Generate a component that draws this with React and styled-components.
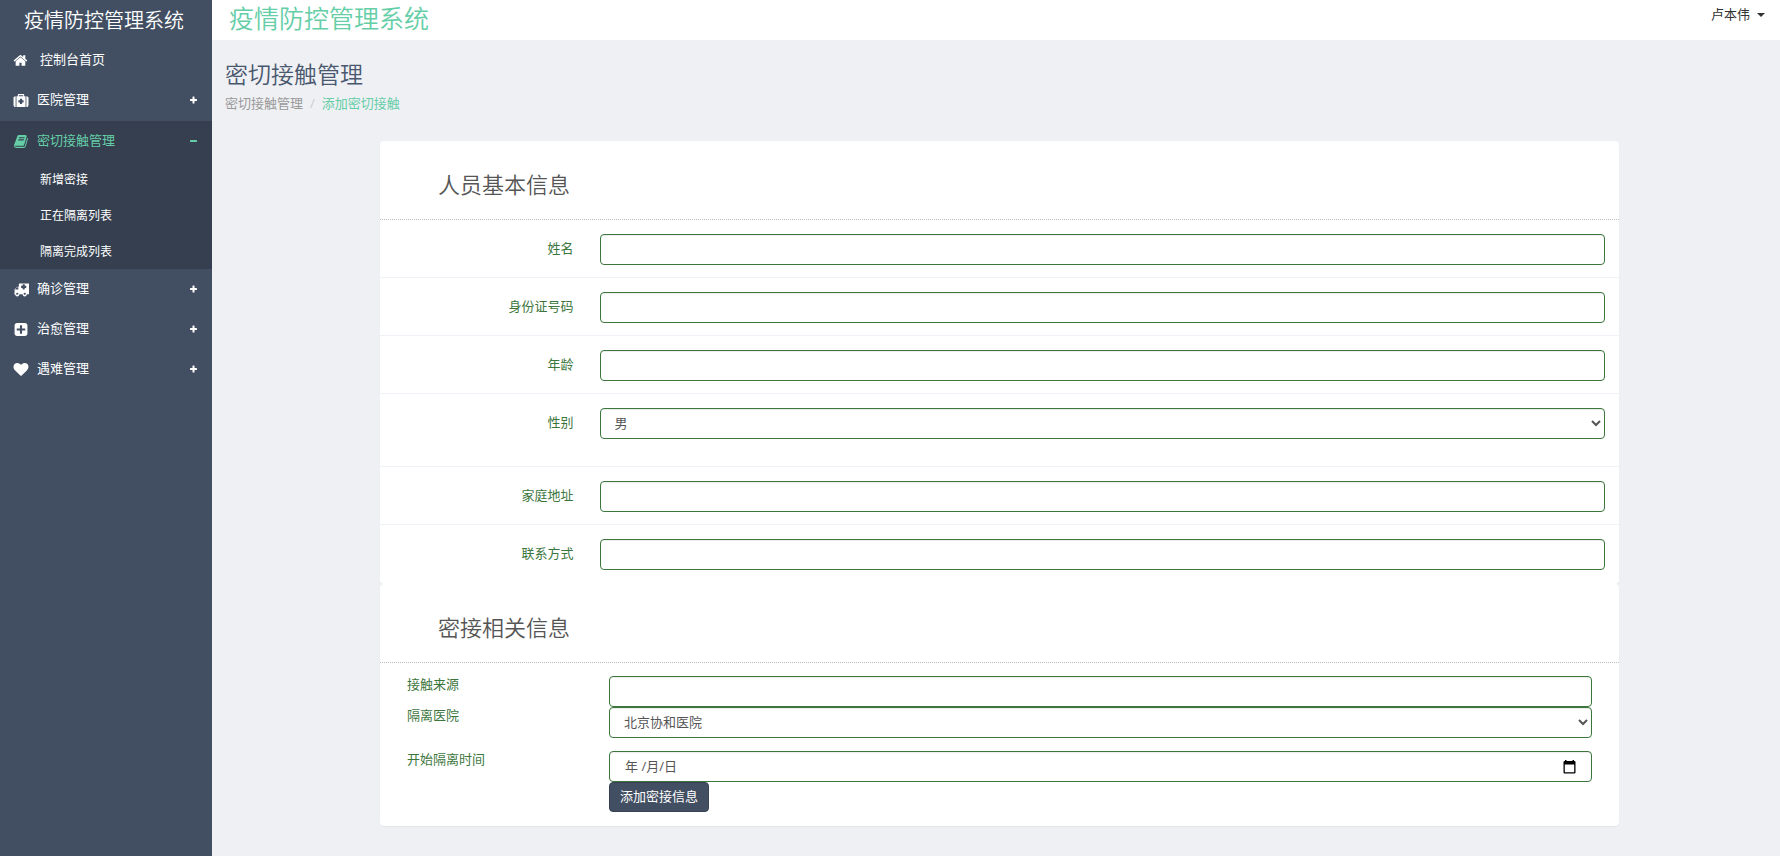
import React from "react";
import styled, { createGlobalStyle, css } from "styled-components";

const theme = {
  dark: "#424f63",
  darker: "#353f4f",
  green: "#65cea7",
  success: "#3c763d",
  page: "#eff0f4",
  text: "#555"
};

const GlobalStyle = createGlobalStyle`
  *, *::before, *::after {
    box-sizing: border-box;
  }

  body {
    margin: 0;
    background: ${theme.page};
    color: ${theme.text};
    font-family: "Open Sans", "Noto Sans CJK SC", sans-serif;
    font-size: 13px;
    line-height: 20px;
  }

  input, select, button {
    font: inherit;
  }

  a {
    text-decoration: none;
  }

  h1, h2, ul, ol {
    margin: 0;
    padding: 0;
    list-style: none;
  }
`;

const Layout = styled.div`
  display: flex;
  min-height: 100vh;
`;

const Sidebar = styled.nav`
  flex: 0 0 212px;
  background: ${theme.dark};
  color: #fff;
`;

const Logo = styled.a`
  display: block;
  height: 40px;
  padding: 1px 4px 0 0;
  color: #fff;
  font-size: 20px;
  font-weight: 350;
  line-height: 39px;
  text-align: center;
`;

const MenuGroup = styled.li`
  ${({ $active }) =>
    $active &&
    css`
      margin-top: 1px;
      background: ${theme.darker};
      color: ${theme.green};
    `}
`;

const MenuLink = styled.a`
  display: flex;
  align-items: center;
  height: 40px;
  padding: 0 14px 0 13px;
  color: inherit;
`;

const MenuText = styled.span`
  flex: 1;
  padding: 0 0 2px ${({ $wide }) => ($wide ? "11px" : "8px")};
`;

const SubLink = styled.a`
  display: block;
  padding: 2px 0 0 40px;
  color: #fff;
  font-size: 12px;
  line-height: 34px;
`;

const Main = styled.div`
  flex: 1;
  min-width: 0;
`;

const Header = styled.header`
  display: flex;
  justify-content: space-between;
  align-items: flex-start;
  height: 41px;
  padding: 0 15px 0 17px;
  background: #fff;
  border-bottom: 1px solid ${theme.page};
`;

const Brand = styled.span`
  color: ${theme.green};
  font-size: 25px;
  font-weight: 350;
  line-height: 36px;
`;

const UserButton = styled.button`
  display: flex;
  align-items: center;
  gap: 7px;
  padding: 4px 0;
  border: 0;
  background: none;
  color: #333;
`;

const Caret = styled.span`
  margin-top: 2px;
  border: 4px solid transparent;
  border-top-color: #333;
  border-bottom: 0;
`;

const PageHeading = styled.section`
  padding: 18px 13px 28px;
`;

const PageTitle = styled.h1`
  color: #49586e;
  font-size: 23px;
  font-weight: 350;
  line-height: 30px;
`;

const Breadcrumb = styled.ol`
  display: flex;
  margin-top: 4px;

  li + li::before {
    content: "/";
    padding: 0 7px;
    color: #ccc;
  }
`;

const Crumb = styled.a`
  color: ${({ $active }) => ($active ? theme.green : "#999")};
`;

const Form = styled.form`
  margin: 0 161px 29px 168px;
`;

const Panel = styled.section`
  background: #fff;
  border-radius: 4px;
  box-shadow: 0 1px 1px rgba(0, 0, 0, 0.05);
`;

const PanelTitle = styled.h2`
  padding: 29px 58px 21px;
  border-bottom: 1px dotted #bbb;
  font-size: 22px;
  font-weight: 350;
  line-height: 28px;
`;

const PanelBody = styled.div`
  padding: 13px 13px 14px 14px;
`;

const Row = styled.div`
  display: grid;
  grid-template-columns: 2fr 10fr;
  padding: 14px 0 ${({ $tall }) => ($tall ? "27px" : "12px")};
  border-bottom: 1px solid #f1f2f7;

  &:last-child {
    padding-bottom: 14px;
    border-bottom: 0;
  }
`;

const CompactRow = styled.div`
  display: grid;
  grid-template-columns: 2fr 10fr;
  margin-bottom: ${({ $spaced }) => ($spaced ? "13px" : "0")};
`;

const Label = styled.label`
  padding: 4px 13px;
  color: ${theme.success};
  text-align: right;
`;

const CompactLabel = styled(Label)`
  padding-top: 0;
  line-height: 16px;
  text-align: left;
`;

const Cell = styled.div`
  padding: 0 14px 0 13px;
`;

const fieldBox = css`
  display: block;
  width: 100%;
  height: 31px;
  border: 1px solid ${theme.success};
  border-radius: 4px;
  background: #fff;
  box-shadow: inset 0 1px 1px rgba(0, 0, 0, 0.075);
  color: ${theme.text};
`;

const Input = styled.input`
  ${fieldBox}
  padding: 4px 12px;
`;

const Select = styled.select`
  ${fieldBox}
  padding: 3px 1px 5px 10px;
`;

const DateBox = styled.div`
  ${fieldBox}
  display: flex;
  align-items: center;
  padding: 0 15px;
`;

const DateInput = styled.input`
  flex: 1;
  min-width: 0;
  padding: 0 0 2px;
  border: 0;
  background: none;
  color: inherit;

  &::placeholder {
    color: inherit;
    opacity: 1;
  }
`;

const CalendarButton = styled.button`
  display: flex;
  padding: 0;
  border: 0;
  background: none;
  color: #000;
`;

const Submit = styled.button`
  display: block;
  height: 30px;
  padding: 0 10px 2px;
  border: 1px solid #374152;
  border-radius: 4px;
  background: ${theme.dark};
  color: #fff;
`;

const icons = {
  home:
    "M1408 992v480q0 26-19 45t-45 19h-384v-384h-256v384h-384q-26 0-45-19t-19-45v-480q0-1 .5-3t.5-3l575-474 575 474q1 2 1 6zm223-69l-62 74q-8 9-21 11h-3q-13 0-21-7l-692-577-692 577q-12 8-24 7-13-2-21-11l-62-74q-8-10-7-23.5t11-21.5l719-599q32-26 76-26t76 26l244 204v-195q0-14 9-23t23-9h192q14 0 23 9t9 23v408l219 182q10 8 11 21.5t-7 23.5z",
  medkit:
    "M1206 1088v-192q0-14-9-23t-23-9h-150v-150q0-14-9-23t-23-9h-192q-14 0-23 9t-9 23v150h-150q-14 0-23 9t-9 23v192q0 14 9 23t23 9h150v150q0 14 9 23t23 9h192q14 0 23-9t9-23v-150h150q14 0 23-9t9-23zm-566-704h512v-128h-512v128zm-384 0v1280h-32q-92 0-158-66t-66-158v-832q0-92 66-158t158-66h32zm1184 0v1280h-1088v-1280h160v-160q0-40 28-68t68-28h576q40 0 68 28t28 68v160h160zm352 224v832q0 92-66 158t-158 66h-32v-1280h32q92 0 158 66t66 158z",
  book:
    "M1703 478q40 57 18 129l-275 906q-19 64-76.5 107.5t-122.5 43.5h-923q-77 0-148.5-53.5t-99.5-131.5q-24-67-2-127 0-4 3-27t4-37q1-8-3-21.5t-3-19.5q2-11 8-21t16.5-23.5 16.5-23.5q23-38 45-91.5t30-91.5q3-10 .5-30t-.5-28q3-11 17-28t17-23q21-36 42-92t25-90q1-9-2.5-32t.5-28q4-13 22-30.5t22-22.5q19-26 42.5-84.5t27.5-96.5q1-8-3-25.5t-2-26.5q2-8 9-18t18-23 17-21q8-12 16.5-30.5t15-35 16-36 19.5-32 26.5-23.5 36-11.5 47.5 5.5l-1 3q38-9 51-9h761q74 0 114 56t18 130l-274 906q-36 119-71.5 153.5t-128.5 34.5h-869q-27 0-38 15-11 16-1 43 24 70 144 70h923q29 0 56-15.5t35-41.5l300-987q7-22 5-57 38 15 59 43zm-1064 2q-4 13 2 22.5t20 9.5h608q13 0 25.5-9.5t16.5-22.5l21-64q4-13-2-22.5t-20-9.5h-608q-13 0-25.5 9.5t-16.5 22.5zm-83 256q-4 13 2 22.5t20 9.5h608q13 0 25.5-9.5t16.5-22.5l21-64q4-13-2-22.5t-20-9.5h-608q-13 0-25.5 9.5t-16.5 22.5z",
  ambulance:
    "M576 1408q0-52-38-90t-90-38-90 38-38 90 38 90 90 38 90-38 38-90zm-384-512h384v-256h-158q-14 2-22 9l-195 195q-7 12-9 22v30zm1280 512q0-52-38-90t-90-38-90 38-38 90 38 90 90 38 90-38 38-90zm54-736v-192q0-14-9-23t-23-9h-150v-150q0-14-9-23t-23-9h-192q-14 0-23 9t-9 23v150h-150q-14 0-23 9t-9 23v192q0 14 9 23t23 9h150v150q0 14 9 23t23 9h192q14 0 23-9t9-23v-150h150q14 0 23-9t9-23zm330-480v1216q0 26-19 45t-45 19h-192q0 106-75 181t-181 75-181-75-75-181h-384q0 106-75 181t-181 75-181-75-75-181h-64q-26 0-45-19t-19-45 19-45 45-19v-416q0-26 13-58t32-51l198-198q19-19 51-32t58-13h160v-320q0-26 19-45t45-19h1152q26 0 45 19t19 45z",
  plusSquare:
    "M1408 960v-128q0-26-19-45t-45-19h-320v-320q0-26-19-45t-45-19h-128q-26 0-45 19t-19 45v320h-320q-26 0-45 19t-19 45v128q0 26 19 45t45 19h320v320q0 26 19 45t45 19h128q26 0 45-19t19-45v-320h320q26 0 45-19t19-45zm256-544v960q0 119-84.5 203.5t-203.5 84.5h-960q-119 0-203.5-84.5t-84.5-203.5v-960q0-119 84.5-203.5t203.5-84.5h960q119 0 203.5 84.5t84.5 203.5z",
  heart:
    "M896 1664q-26 0-44-18l-624-602q-10-8-27.5-26t-55.5-65.5-68-97.5-53.5-121-23.5-138q0-220 127-344t351-124q62 0 126.5 21.5t120 58 95.5 68.5 76 68q36-36 76-68t95.5-68.5 120-58 126.5-21.5q224 0 351 124t127 344q0 221-229 450l-623 600q-18 18-44 18z"
};

const menu = [
  { icon: "home", text: "控制台首页" },
  { icon: "medkit", text: "医院管理", sign: "plus" },
  {
    icon: "book",
    text: "密切接触管理",
    sign: "minus",
    active: true,
    children: ["新增密接", "正在隔离列表", "隔离完成列表"]
  },
  { icon: "ambulance", text: "确诊管理", sign: "plus" },
  { icon: "plusSquare", text: "治愈管理", sign: "plus" },
  { icon: "heart", text: "遇难管理", sign: "plus" }
];

const personFields = [
  { id: "name", label: "姓名" },
  { id: "idCard", label: "身份证号码" },
  { id: "age", label: "年龄" },
  { id: "sex", label: "性别", options: ["男", "女"] },
  { id: "address", label: "家庭地址" },
  { id: "phone", label: "联系方式" }
];

function MenuIcon({ name }) {
  return (
    <svg
      width="16"
      height="15"
      viewBox="-60 0 1911 1792"
      fill="currentColor"
      aria-hidden="true"
    >
      <path d={icons[name]} />
    </svg>
  );
}

function Sign({ type }) {
  return (
    <svg
      width="8"
      height="8"
      viewBox="0 0 8 8"
      fill="currentColor"
      aria-hidden="true"
    >
      <rect x="0" y="3" width="7" height="2" rx="0.5" />
      {type === "plus" && <rect x="2.5" y="0.5" width="2" height="7" rx="0.5" />}
    </svg>
  );
}

function CalendarIcon() {
  return (
    <svg width="13" height="14" viewBox="0 0 13 14" aria-hidden="true">
      <path
        fill="currentColor"
        fillRule="evenodd"
        d="M2 0h1.500v1h6V0H11v1h.5Q12.500 1 12.500 2v10.500q0 1-1 1h-10q-1 0-1-1V2q0-1 1-1H2zM1.800 4.500v7.700h9.400V4.500z"
      />
    </svg>
  );
}

function Menu() {
  return (
    <ul>
      {menu.map(({ icon, text, sign, active, children }) => (
        <MenuGroup key={text} $active={active}>
          <MenuLink href="#">
            <MenuIcon name={icon} />
            <MenuText $wide={!sign}>{text}</MenuText>
            {sign && <Sign type={sign} />}
          </MenuLink>
          {children && (
            <ul>
              {children.map(child => (
                <li key={child}>
                  <SubLink href="#">{child}</SubLink>
                </li>
              ))}
            </ul>
          )}
        </MenuGroup>
      ))}
    </ul>
  );
}

function Field({ id, label, options }) {
  return (
    <Row $tall={Boolean(options)}>
      <Label htmlFor={id}>{label}</Label>
      <Cell>
        {options ? (
          <Select id={id}>
            {options.map(option => (
              <option key={option}>{option}</option>
            ))}
          </Select>
        ) : (
          <Input id={id} type="text" />
        )}
      </Cell>
    </Row>
  );
}

function App() {
  return (
    <Layout>
      <GlobalStyle />
      <Sidebar>
        <Logo href="#">疫情防控管理系统</Logo>
        <Menu />
      </Sidebar>

      <Main>
        <Header>
          <Brand>疫情防控管理系统</Brand>
          <UserButton type="button">
            卢本伟
            <Caret />
          </UserButton>
        </Header>

        <PageHeading>
          <PageTitle>密切接触管理</PageTitle>
          <Breadcrumb>
            <li>
              <Crumb href="#">密切接触管理</Crumb>
            </li>
            <li>
              <Crumb href="#" $active>
                添加密切接触
              </Crumb>
            </li>
          </Breadcrumb>
        </PageHeading>

        <Form onSubmit={e => e.preventDefault()}>
          <Panel>
            <PanelTitle>人员基本信息</PanelTitle>
            <div>
              {personFields.map(field => (
                <Field key={field.id} {...field} />
              ))}
            </div>
          </Panel>

          <Panel>
            <PanelTitle>密接相关信息</PanelTitle>
            <PanelBody>
              <CompactRow>
                <CompactLabel htmlFor="source">接触来源</CompactLabel>
                <Cell>
                  <Input id="source" type="text" />
                </Cell>
              </CompactRow>
              <CompactRow $spaced>
                <CompactLabel htmlFor="hospital">隔离医院</CompactLabel>
                <Cell>
                  <Select id="hospital">
                    <option>北京协和医院</option>
                  </Select>
                </Cell>
              </CompactRow>
              <CompactRow>
                <CompactLabel htmlFor="startDate">开始隔离时间</CompactLabel>
                <Cell>
                  <DateBox>
                    <DateInput
                      id="startDate"
                      type="text"
                      placeholder="年 /月/日"
                    />
                    <CalendarButton type="button" aria-label="选择日期">
                      <CalendarIcon />
                    </CalendarButton>
                  </DateBox>
                  <Submit type="submit">添加密接信息</Submit>
                </Cell>
              </CompactRow>
            </PanelBody>
          </Panel>
        </Form>
      </Main>
    </Layout>
  );
}

export default App;
